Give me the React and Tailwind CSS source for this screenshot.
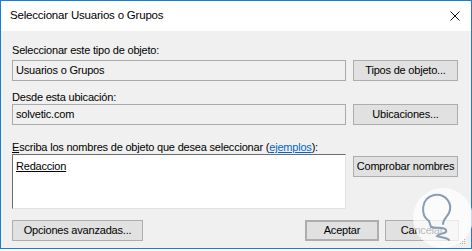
import React from "react";

const Btn = ({ children, className = "" }) => (
  <button
    className={`h-[21px] bg-[#e1e1e1] border border-[#adadad] text-[11px] tracking-[-0.2px] text-black leading-none whitespace-nowrap ${className}`}
  >
    {children}
  </button>
);

const Field = ({ children }) => (
  <div className="h-[21px] w-[334px] border border-[#a9a9a9] bg-[#f0f0f0] pl-[3px] flex items-center leading-none">
    {children}
  </div>
);

const Watermark = () => (
  <svg
    className="absolute left-[412px] top-[187px]"
    width="62"
    height="62"
    viewBox="0 0 62 62"
  >
    <circle cx="31" cy="31" r="30" fill="#ffffff" fillOpacity="0.72" />
    <g fill="none" stroke="#8b9db3" strokeWidth="2" strokeLinecap="round">
      <path d="M17 34 C8 28 9 11 22 8 C34 6 41 17 37 26 C35 30 31 32 31 37" />
      <path d="M17 34 L19 40" />
      <path d="M19 40 C24 42 32 39 34 43 C36 47 27 46 25 49 C30 51 35 50 37 53" />
    </g>
  </svg>
);

export default function App() {
  return (
    <div className="relative w-[472px] h-[251px] bg-white">
      <div
        className="w-[472px] h-[249px] border border-[#1c7cd5] bg-[#f0f0f0] flex flex-col text-black"
        style={{ fontFamily: '"Liberation Sans", Arial, sans-serif' }}
      >
        {/* title bar */}
        <div className="h-[30px] bg-white flex items-center justify-between pl-[9px] pr-[11px] shrink-0">
          <span className="text-[11.5px] tracking-[-0.2px] leading-none">Seleccionar Usuarios o Grupos</span>
          <svg width="10" height="10" viewBox="0 0 10 10">
            <path d="M0.5 0.5 L9.5 9.5 M9.5 0.5 L0.5 9.5" stroke="#111" strokeWidth="1" />
          </svg>
        </div>

        <div className="flex flex-col pl-[11px] pr-[12px] pt-[12px] text-[11px] tracking-[-0.2px]">
          <div className="h-[14px] leading-[14px]">Seleccionar este tipo de objeto:</div>
          <div className="mt-[3px] flex items-center gap-[7px]">
            <Field>Usuarios o Grupos</Field>
            <Btn className="w-[105px]">Tipos de objeto...</Btn>
          </div>

          <div className="mt-[9px] h-[14px] leading-[14px]">Desde esta ubicación:</div>
          <div className="flex items-center gap-[7px]">
            <Field>solvetic.com</Field>
            <Btn className="w-[105px]">Ubicaciones...</Btn>
          </div>

          <div className="mt-[15px] h-[14px] leading-[14px]">
            <span className="underline">E</span>scriba los nombres de objeto que desea seleccionar (
            <span className="text-[#0066cc] underline">ejemplos</span>):
          </div>
          <div className="flex items-start gap-[7px]">
            <div className="h-[55px] w-[334px] bg-white border border-t-[#6d6d6d] border-l-[#6d6d6d] border-r-[#e3e3e3] border-b-[#e3e3e3] pl-[3px] pt-[3px]">
              <span className="underline leading-[14px]">Redaccion</span>
            </div>
            <Btn className="mt-[2px] w-[105px]">Comprobar nombres</Btn>
          </div>

          <div className="mt-[11px] flex items-center">
            <Btn className="w-[131px]">Opciones avanzadas...</Btn>
            <div className="flex-1" />
            <Btn className="w-[74px] border-2 border-[#0078d7]">Aceptar</Btn>
            <Btn className="ml-[6px] w-[74px]">Cancelar</Btn>
          </div>
        </div>
      </div>
      <Watermark />
      <div className="absolute left-[460px] top-[239px] grid grid-cols-3 gap-[1px]">
        <span className="w-[1px] h-[1px]" />
        <span className="w-[1px] h-[1px]" />
        <span className="w-[1px] h-[1px] bg-[#b5b5b5]" />
        <span className="w-[1px] h-[1px]" />
        <span className="w-[1px] h-[1px] bg-[#b5b5b5]" />
        <span className="w-[1px] h-[1px] bg-[#b5b5b5]" />
        <span className="w-[1px] h-[1px] bg-[#b5b5b5]" />
        <span className="w-[1px] h-[1px] bg-[#b5b5b5]" />
        <span className="w-[1px] h-[1px] bg-[#b5b5b5]" />
      </div>
    </div>
  );
}
